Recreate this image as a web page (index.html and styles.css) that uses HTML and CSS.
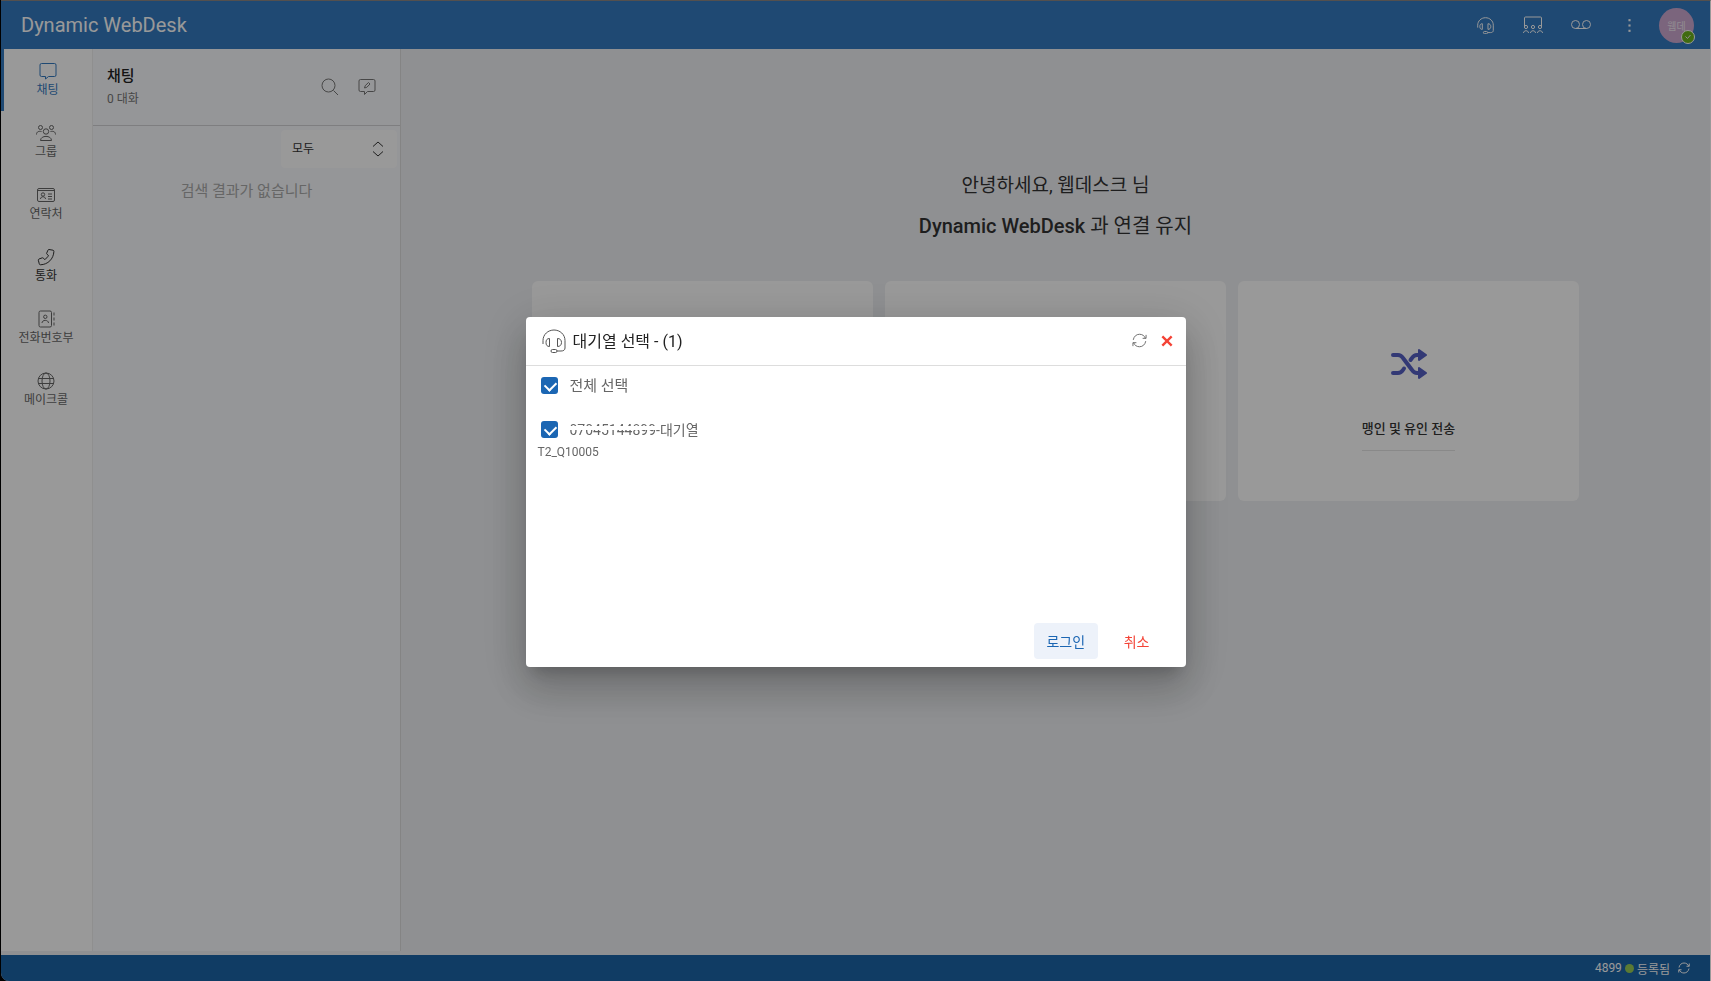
FILE: index.html
```
<!DOCTYPE html>
<html lang="ko">
<head>
    <meta charset="UTF-8">
    <meta name="viewport" content="width=device-width, initial-scale=1.0">
    <title>Dynamic WebDesk</title>
    <link rel="stylesheet" href="styles.css">
</head>
<body>
    <svg class="sprite" aria-hidden="true">
        <symbol id="i-headset" viewBox="0 0 24 24">
            <path d="M1 15v-3.500C1 5.500 6 1 12 1s11 4.500 11 10.500V19c0 2-1.500 3-4 3h-4M7.500 9.500v8C5 17.500 4 16 4 13.500s1-4 3.500-4zM15.500 9.500v8c2.500 0 4-1.500 4-4s-1.500-4-4-4z"/>
            <rect x="9" y="20.500" width="6" height="3" rx="1.500"/>
        </symbol>
        <symbol id="i-refresh" viewBox="0 0 24 24">
            <path d="M2 11C3 5.500 7 2 12 2c4.500 0 8 2.500 9.500 6.500M22.500 3v5.500H17M22 13c-1 5.500-5 9-10 9-4.500 0-8-2.500-9.500-6.500M1.500 21v-5.500H7"/>
        </symbol>
    </svg>

    <div class="app">
        <header class="topbar">
            <h1>Dynamic WebDesk</h1>
            <div class="tools">
                <button class="tool" aria-label="대기열"><svg class="i16"><use href="#i-headset"/></svg></button>
                <button class="tool" aria-label="회의">
                    <svg class="i20" viewBox="0 0 20 18"><path d="M1.500 11V2q0-1 1-1h15q1 0 1 1v9"/><circle cx="3" cy="11" r="1.600"/><circle cx="10" cy="11" r="1.600"/><circle cx="17" cy="11" r="1.600"/><path d="M.5 17c0-3 5-3 5 0M7.500 17c0-3 5-3 5 0M14.500 17c0-3 5-3 5 0"/></svg>
                </button>
                <button class="tool" aria-label="음성 사서함">
                    <svg class="i20" viewBox="0 0 20 18"><circle cx="4.500" cy="8.500" r="4"/><circle cx="15.500" cy="8.500" r="4"/><path d="M4.500 12.500h11"/></svg>
                </button>
                <button class="tool" aria-label="더 보기">
                    <svg class="i16 dots" viewBox="0 0 16 16"><rect x="7" y="2" width="2" height="2"/><rect x="7" y="7" width="2" height="2"/><rect x="7" y="12" width="2" height="2"/></svg>
                </button>
                <button class="avatar">웹데<span class="status"><svg viewBox="0 0 12 12"><path d="M3.500 5.500l2 2 3-3.500"/></svg></span></button>
            </div>
        </header>

        <div class="main">
            <nav class="sidebar">
                <a href="#" class="active">
                    <svg viewBox="0 0 18 18"><path d="M2.500 1.500h13q1.500 0 1.500 1.500v10q0 1.500-1.500 1.500H9.500L6.500 17v-2.500h-4Q1 14.500 1 13V3q0-1.500 1.500-1.500z"/></svg>
                    채팅
                </a>
                <a href="#">
                    <svg class="wide" viewBox="0 0 20 18"><circle cx="4.500" cy="3.500" r="2"/><circle cx="15.500" cy="3.500" r="2"/><circle cx="10" cy="7.500" r="2.700"/><path d="M.5 10.500C.5 7.500 3 7 5.500 7.500M19.500 10.500c0-3-2.500-3.500-5-3M4.500 16.500c0-5.500 11-5.500 11 0z"/></svg>
                    그룹
                </a>
                <a href="#">
                    <svg class="wide" viewBox="0 0 20 18"><rect x="1.500" y="2.500" width="17" height="13" rx="1.500"/><path d="M1.500 4.500h17M4.500 13c0-3 5-3 5 0M12 8h4M12 10.500h4M12 13h4"/><circle cx="7" cy="8.500" r="1.700"/></svg>
                    연락처
                </a>
                <a href="#" class="dark">
                    <svg viewBox="0 0 18 18"><path d="M12 1.500l4 .7q.9.200.9 1.200C16.500 11 11 16.500 3.500 16.800q-1 0-1.200-.9l-1-3.700q-.1-.8.700-1.200l3.300-1.200q.7-.2 1.200.4l1 1.300c2-1 3-2.200 4-4L10 6.300q-.6-.5-.3-1.200L11 2.100q.3-.7 1-.6z"/></svg>
                    통화
                </a>
                <a href="#">
                    <svg viewBox="0 0 18 18"><rect x="2" y="1" width="12.500" height="16" rx="1.500"/><circle cx="8.300" cy="6.800" r="1.700"/><path d="M5 13c0-3.500 6.500-3.500 6.500 0M17 2.500v3M17 7.500v3M17 12.500v3"/></svg>
                    전화번호부
                </a>
                <a href="#">
                    <svg viewBox="0 0 18 18"><circle cx="9" cy="9" r="8"/><ellipse cx="9" cy="9" rx="4" ry="8"/><path d="M1.500 6.500h15M1.500 11.500h15"/></svg>
                    메이크콜
                </a>
            </nav>

            <section class="chats">
                <div class="chats-head">
                    <div>
                        <h2>채팅</h2>
                        <p>0 대화</p>
                    </div>
                    <div class="chats-actions">
                        <button aria-label="검색"><svg viewBox="0 0 18 18"><circle cx="7.500" cy="7.500" r="6.500"/><path d="M12.500 12.500L17 17"/></svg></button>
                        <button aria-label="새 채팅"><svg viewBox="0 0 18 18"><path d="M2.500 1.500h13q1.500 0 1.500 1.500v9q0 1.500-1.500 1.500h-6L6.500 16.500v-3h-4Q1 13.500 1 12V3q0-1.500 1.500-1.500zM6.500 10l.7-2.300L10.500 4.500l1.500 1.500-3.200 3.300z"/></svg></button>
                    </div>
                </div>
                <div class="filter">
                    <select aria-label="필터"><option>모두</option></select>
                    <svg viewBox="0 0 12 16"><path d="M1 5.500l5-4.500 5 4.500M1 10.500l5 4.500 5-4.500"/></svg>
                </div>
                <p class="empty">검색 결과가 없습니다</p>
            </section>

            <main class="welcome">
                <p class="hello">안녕하세요, 웹데스크 님</p>
                <p class="hello brand"><strong>Dynamic WebDesk</strong> 과 연결 유지</p>
                <div class="cards">
                    <div class="card"></div>
                    <div class="card"></div>
                    <div class="card">
                        <svg viewBox="0 0 36 32"><path class="line" d="M2 7h5q3 0 5 3l9 12q2 3 5 3h2M2 25h5q3 0 5-3l1-1.500M19.500 12l1.500-2q2-3 5-3h2"/><path class="head" d="M28 2l7 5-7 5zM28 20l7 5-7 5z"/></svg>
                        <span>맹인 및 유인 전송</span>
                    </div>
                </div>
            </main>
        </div>

        <footer class="statusbar">
            <span>4899</span><i class="dot"></i><span>등록됨</span>
            <button aria-label="새로 고침"><svg><use href="#i-refresh"/></svg></button>
        </footer>
    </div>

    <div class="overlay">
        <div class="modal" role="dialog" aria-labelledby="modal-title">
            <div class="modal-head">
                <svg class="headset"><use href="#i-headset"/></svg>
                <h3 id="modal-title">대기열 선택 - (1)</h3>
                <button class="refresh" aria-label="새로 고침"><svg><use href="#i-refresh"/></svg></button>
                <button class="close" aria-label="닫기"><svg viewBox="0 0 12 12"><path d="M2 2l8 8M10 2l-8 8"/></svg></button>
            </div>
            <div class="modal-body">
                <label class="check all"><input type="checkbox" checked><span>전체 선택</span></label>
                <label class="check"><input type="checkbox" checked><span><span class="masked">07045144899</span>-대기열</span></label>
                <p class="queue-id">T2_Q10005</p>
            </div>
            <div class="modal-foot">
                <button class="login">로그인</button>
                <button class="cancel">취소</button>
            </div>
        </div>
    </div>
</body>
</html>
```
FILE: styles.css
```
* { box-sizing: border-box; }
html, body { height: 100%; }
body { margin: 0; background: #000; font-family: Roboto, 'Noto Sans CJK KR', sans-serif; font-size: 14px; color: #333; }
h1, h2, h3, p { margin: 0; font-weight: 400; }
button { border: none; background: none; padding: 0; font: inherit; color: inherit; cursor: pointer; }
svg { fill: none; stroke: currentColor; stroke-width: 1; display: block; }
.sprite { display: none; }

.app { display: flex; flex-direction: column; height: 100vh; margin-left: 1px; border-top: 1px solid #8c8683; border-right: 1px solid #fff; border-bottom-left-radius: 8px; overflow: hidden; background: #eef0f3; }

/* top bar */
.topbar { display: flex; align-items: center; justify-content: space-between; flex: none; height: 48px; padding: 0 16px 0 20px; background: #347ac0; color: #fff; }
.topbar h1 { font-size: 20px; }
.tools { display: flex; align-items: center; }
.tool { display: flex; justify-content: center; width: 48px; }
.i16 { width: 17px; height: 17px; }
.tool .i16 { stroke-width: 1.4; }
.i20 { width: 20px; height: 18px; }
.tool .dots { fill: currentColor; stroke: none; }
.avatar { position: relative; width: 35px; height: 35px; margin-left: 6px; border-radius: 50%; background: #cda8d0; color: #f2e8f3; font-size: 10px; }
.status { position: absolute; right: -1px; bottom: -1px; width: 14px; height: 14px; border: 1px solid #fff; border-radius: 50%; background: #6bb31c; }

/* layout */
.main { display: flex; flex: 1; min-height: 0; }
.sidebar { flex: none; width: 91px; margin-bottom: 4px; background: #fff; }
.sidebar a { display: flex; flex-direction: column; align-items: center; height: 62px; padding: 13px 1px 0 0; gap: 1px; color: #666; font-size: 12px; line-height: 18px; text-decoration: none; }
.sidebar a.active { border-left: 3px solid #347ac0; color: #347ac0; }
.sidebar a.dark { color: #333; }
.sidebar svg { width: 18px; height: 18px; }
.sidebar svg.wide { width: 20px; }

.chats { flex: none; width: 309px; margin-bottom: 4px; background: #f9fafd; border-left: 1px solid #eee; border-right: 1px solid #ddd; }
.chats-head { display: flex; justify-content: space-between; height: 77px; padding: 16px 24px 0 14px; border-bottom: 1px solid #d2d3d6; }
.chats-head h2 { font-size: 15px; font-weight: 500; line-height: 22px; color: #222; }
.chats-head p { font-size: 12px; line-height: 24px; color: #777; }
.chats-actions { display: flex; align-items: center; gap: 19px; height: 43px; color: #777; }
.chats-actions svg { width: 18px; height: 18px; }
.filter { position: relative; width: 116px; margin: 4px 3px 0 auto; color: #333; }
.filter select { display: block; width: 100%; height: 38px; padding: 0 11px; border: none; border-radius: 4px; background: #fff; color: #333; font: 12px Roboto, 'Noto Sans CJK KR', sans-serif; appearance: none; }
.filter svg { position: absolute; right: 13px; top: 11px; width: 12px; height: 16px; pointer-events: none; }
.empty { padding-top: 11px; font-size: 15px; line-height: 24px; text-align: center; color: #aaa; }

.welcome { flex: 1; padding: 117px 131px 0; text-align: center; }
.hello { font-size: 19px; line-height: 40px; color: #333; }
.hello.brand { font-size: 20px; }
.hello strong { font-weight: 500; }
.cards { display: grid; grid-template-columns: repeat(3, 1fr); gap: 12px; margin-top: 35px; }
.card { display: flex; flex-direction: column; align-items: center; height: 220px; padding-top: 67px; border-radius: 6px; background: #fff; }
.card svg { width: 36px; height: 32px; }
.card .line { stroke: #5560c4; stroke-width: 4; stroke-linecap: round; }
.card .head { fill: #5560c4; stroke: #5560c4; stroke-width: 2; stroke-linejoin: round; }
.card span { margin-top: 35px; padding-bottom: 8px; border-bottom: 1px solid #e4e4e4; font-size: 13px; font-weight: 500; line-height: 27px; }

/* bottom bar */
.statusbar { display: flex; align-items: center; justify-content: flex-end; flex: none; height: 26px; padding-right: 20px; background: #1b64a7; color: #fff; font-size: 12px; }
.dot { width: 9px; height: 9px; margin: 0 3px; border-radius: 50%; background: #98cc55; }
.statusbar button { margin-left: 8px; }
.statusbar svg { width: 12px; height: 12px; stroke-width: 2; }

/* queue dialog */
.overlay { position: fixed; inset: 0; display: flex; align-items: center; justify-content: center; padding-top: 2px; background: rgba(0,0,0,0.4); }
.modal { display: flex; flex-direction: column; width: 660px; height: 350px; border-radius: 4px; background: #fff; box-shadow: 0 11px 15px -7px rgba(0,0,0,.2), 0 24px 38px 3px rgba(0,0,0,.14), 0 9px 46px 8px rgba(0,0,0,.12); }
.modal-head { display: flex; align-items: center; height: 49px; padding: 0 12px 0 16px; border-bottom: 1px solid #ddd; }
.modal-head h3 { flex: 1; margin-left: 7px; padding-bottom: 2px; font-size: 16px; color: #222; }
.headset { width: 24px; height: 24px; color: #555; }
.refresh svg { width: 15px; height: 15px; color: #666; stroke-width: 1.5; }
.close { margin-left: 13px; color: #f44336; }
.close svg { width: 14px; height: 14px; stroke-width: 2; }
.modal-body { flex: 1; padding: 8px 12px; color: #666; }
.check { display: flex; align-items: center; height: 24px; gap: 12px; }
.check > span { padding-bottom: 2px; }
.check.all { margin-bottom: 20px; font-size: 15px; }
.check input { appearance: none; width: 17px; height: 17px; margin: 0 0 0 3px; border-radius: 3px; background: #1b66b3; position: relative; }
.check input:checked::after { content: ''; position: absolute; left: 4px; top: 4px; width: 9px; height: 6px; border-left: 2px solid #fff; border-bottom: 2px solid #fff; transform: rotate(-45deg); }
.masked { position: relative; }
.masked::after { content: ''; position: absolute; left: 0; right: 0; top: 4px; height: 4px; background: #fff; }
.queue-id { font-size: 12px; line-height: 20px; }
.modal-foot { display: flex; justify-content: flex-end; gap: 14px; padding: 0 24px 8px 0; }
.modal-foot button { min-width: 64px; height: 36px; padding: 0 12px; border-radius: 4px; font-size: 14px; font-weight: 400; }
.modal-foot .login { background: #edf2fa; color: #1b66b3; }
.modal-foot .cancel { min-width: 0; color: #f44336; }
```
